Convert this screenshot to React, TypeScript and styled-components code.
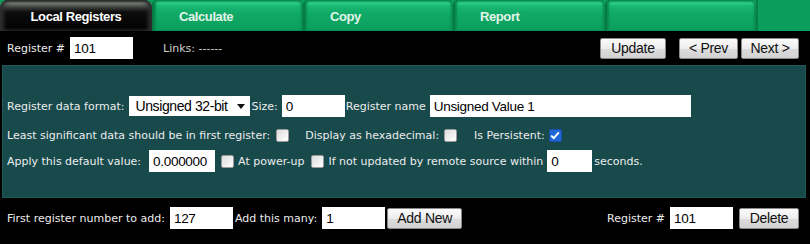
import * as React from "react";
import styled, { createGlobalStyle } from "styled-components";

const GlobalStyle = createGlobalStyle`
  html, body {
    margin: 0;
    padding: 0;
    background: #000;
  }
  body {
    width: 810px;
    height: 244px;
    overflow: hidden;
    font-family: "DejaVu Sans", Verdana, sans-serif;
  }
`;

const Page = styled.div`
  width: 810px;
  height: 244px;
  background: #000;
  display: flex;
  flex-direction: column;
`;

const TabBar = styled.div`
  display: flex;
  height: 31px;
  background: #0b9d5c;
`;

const Tab = styled.div<{ $active?: boolean; $width: number }>`
  width: ${(p) => p.$width}px;
  box-sizing: border-box;
  display: flex;
  align-items: center;
  padding-top: 2px;
  font-family: "Liberation Sans", Arial, sans-serif;
  font-weight: bold;
  font-size: 13px;
  letter-spacing: -0.4px;
  ${(p) =>
    p.$active
      ? `
    justify-content: center;
    color: #fff;
    background: linear-gradient(to bottom, #1a1c1a 0, #80847f 3px, #3f423e 7px, #0c0d0c 12px, #000 100%);
    border-radius: 8px 8px 0 0;
    box-shadow: inset 4px 0 4px #2e302e, inset -4px 0 4px #2e302e;
  `
      : `
    padding-left: 25px;
    color: #e2f4ea;
    background: linear-gradient(to bottom, #08804b 0, #2ccf88 3px, #18b873 6px, #10aa67 13px, #0b9d5c 100%);
    border-left: 2px solid #067a44;
    border-radius: 5px 5px 0 0;
    box-shadow: inset 2px 0 2px #0a8a50, inset -2px 0 2px #0a8a50;
  `}
`;

const TabFiller = styled.div`
  flex: 1;
  background: #0b9d5c;
  border-left: 2px solid #087f49;
`;

const TopRow = styled.div`
  height: 34px;
  display: flex;
  align-items: center;
  padding: 0 11px 0 7px;
`;

const Label = styled.span<{ $gap?: number; $lead?: number }>`
  color: #ececec;
  font-size: 11px;
  letter-spacing: 0;
  white-space: nowrap;
  margin-left: ${(p) => p.$lead ?? 0}px;
  margin-right: ${(p) => p.$gap ?? 0}px;
`;

const Links = styled(Label)`
  color: #d0d0d0;
`;

const TextBox = styled.input<{ $width: number }>`
  width: ${(p) => p.$width}px;
  height: 22px;
  box-sizing: border-box;
  border: none;
  padding: 0 0 0 4px;
  margin: 0;
  background: #fff;
  color: #000;
  font-family: "Liberation Sans", Arial, sans-serif;
  font-size: 13.5px;
  letter-spacing: -0.3px;
  outline: none;
`;

const Spacer = styled.div`
  flex: 1;
`;

const Button = styled.button<{ $width: number; $lead?: number }>`
  width: ${(p) => p.$width}px;
  height: 21px;
  margin: 0 0 0 ${(p) => p.$lead ?? 0}px;
  padding: 0;
  box-sizing: border-box;
  border: 1px solid #8a8a8a;
  border-radius: 2px;
  background: linear-gradient(to bottom, #fbfbfb 0, #ececec 50%, #dcdcdc 51%, #d2d2d2 100%);
  color: #111;
  font-family: "Liberation Sans", Arial, sans-serif;
  font-size: 14px;
  letter-spacing: -0.3px;
`;

const Panel = styled.div`
  margin: 0 4px 0 2px;
  height: 133px;
  box-sizing: border-box;
  background: #184a4c;
  border: 1px solid #24595a;
  padding: 29px 4px 0 4px;
  display: flex;
  flex-direction: column;
`;

const PanelRow = styled.div<{ $height: number; $top?: number }>`
  display: flex;
  align-items: center;
  height: ${(p) => p.$height}px;
  margin-top: ${(p) => p.$top ?? 0}px;
`;

const SelectBox = styled.div`
  width: 121px;
  height: 20px;
  box-sizing: border-box;
  background: #fff;
  display: flex;
  align-items: center;
  justify-content: space-between;
  padding: 0 5px 0 6px;
  margin: 0 1px 0 5px;
  font-family: "Liberation Sans", Arial, sans-serif;
  font-size: 14px;
  letter-spacing: -0.4px;
  color: #000;
`;

const Check = styled.span<{ $checked?: boolean; $gap?: number; $lead?: number }>`
  width: 13px;
  height: 13px;
  box-sizing: border-box;
  display: inline-flex;
  align-items: center;
  justify-content: center;
  margin-left: ${(p) => p.$lead ?? 0}px;
  margin-right: ${(p) => p.$gap ?? 0}px;
  border: 1px solid ${(p) => (p.$checked ? "#1d4fb0" : "#9a9a9a")};
  background: ${(p) => (p.$checked ? "#1f66d6" : "linear-gradient(135deg, #dcdcdc, #ffffff)")};
  border-radius: 2px;
`;

const BottomRow = styled.div`
  height: 22px;
  margin-top: 9px;
  display: flex;
  align-items: center;
  padding: 0 11px 0 7px;
`;

const CheckBox = (props: { checked?: boolean; gap?: number; lead?: number }) => (
  <Check $checked={props.checked} $gap={props.gap} $lead={props.lead}>
    {props.checked && (
      <svg width="10" height="9" viewBox="0 0 10 9">
        <path d="M1.2 4.6 L3.8 7.2 L8.8 1.4" fill="none" stroke="#fff" strokeWidth="1.9" />
      </svg>
    )}
  </Check>
);

const tabs = [
  { name: "Local Registers", width: 152, active: true },
  { name: "Calculate", width: 151 },
  { name: "Copy", width: 150 },
  { name: "Report", width: 152 },
  { name: "", width: 151 },
];

const App = () => (
  <Page>
    <GlobalStyle />
    <TabBar>
      {tabs.map((t, i) => (
        <Tab key={i} $active={t.active} $width={t.width}>
          {t.name}
        </Tab>
      ))}
      <TabFiller />
    </TabBar>

    <TopRow>
      <Label $gap={5}>Register #</Label>
      <TextBox $width={63} defaultValue="101" />
      <Links $lead={30}>Links: ------</Links>
      <Spacer />
      <Button $width={66}>Update</Button>
      <Button $width={59} $lead={13}>&lt; Prev</Button>
      <Button $width={58} $lead={3}>Next &gt;</Button>
    </TopRow>

    <Panel>
      <PanelRow $height={22}>
        <Label>Register data format:</Label>
        <SelectBox>
          <span>Unsigned 32-bit</span>
          <svg width="8" height="5" viewBox="0 0 8 5">
            <path d="M0 0 H8 L4 5 Z" fill="#111" />
          </svg>
        </SelectBox>
        <Label $gap={4}>Size:</Label>
        <TextBox $width={63} defaultValue="0" />
        <Label $gap={4} $lead={1}>Register name</Label>
        <TextBox $width={261} defaultValue="Unsigned Value 1" />
      </PanelRow>

      <PanelRow $height={29} $top={4}>
        <Label $gap={6}>Least significant data should be in first register:</Label>
        <CheckBox gap={16} />
        <Label $gap={5}>Display as hexadecimal:</Label>
        <CheckBox gap={17} />
        <Label $gap={4}>Is Persistent:</Label>
        <CheckBox checked />
      </PanelRow>

      <PanelRow $height={22}>
        <Label $gap={8}>Apply this default value:</Label>
        <TextBox $width={66} defaultValue="0.000000" />
        <CheckBox lead={6} gap={4} />
        <Label $gap={7}>At power-up</Label>
        <CheckBox gap={4} />
        <Label $gap={4}>If not updated by remote source within</Label>
        <TextBox $width={45} defaultValue="0" />
        <Label $lead={2}>seconds.</Label>
      </PanelRow>
    </Panel>

    <BottomRow>
      <Label $gap={5}>First register number to add:</Label>
      <TextBox $width={63} defaultValue="127" />
      <Label $lead={2} $gap={5}>Add this many:</Label>
      <TextBox $width={63} defaultValue="1" />
      <Button $width={75} $lead={2}>Add New</Button>
      <Spacer />
      <Label $gap={5}>Register #</Label>
      <TextBox $width={63} defaultValue="101" />
      <Button $width={60} $lead={6}>Delete</Button>
    </BottomRow>
  </Page>
);

export default App;
